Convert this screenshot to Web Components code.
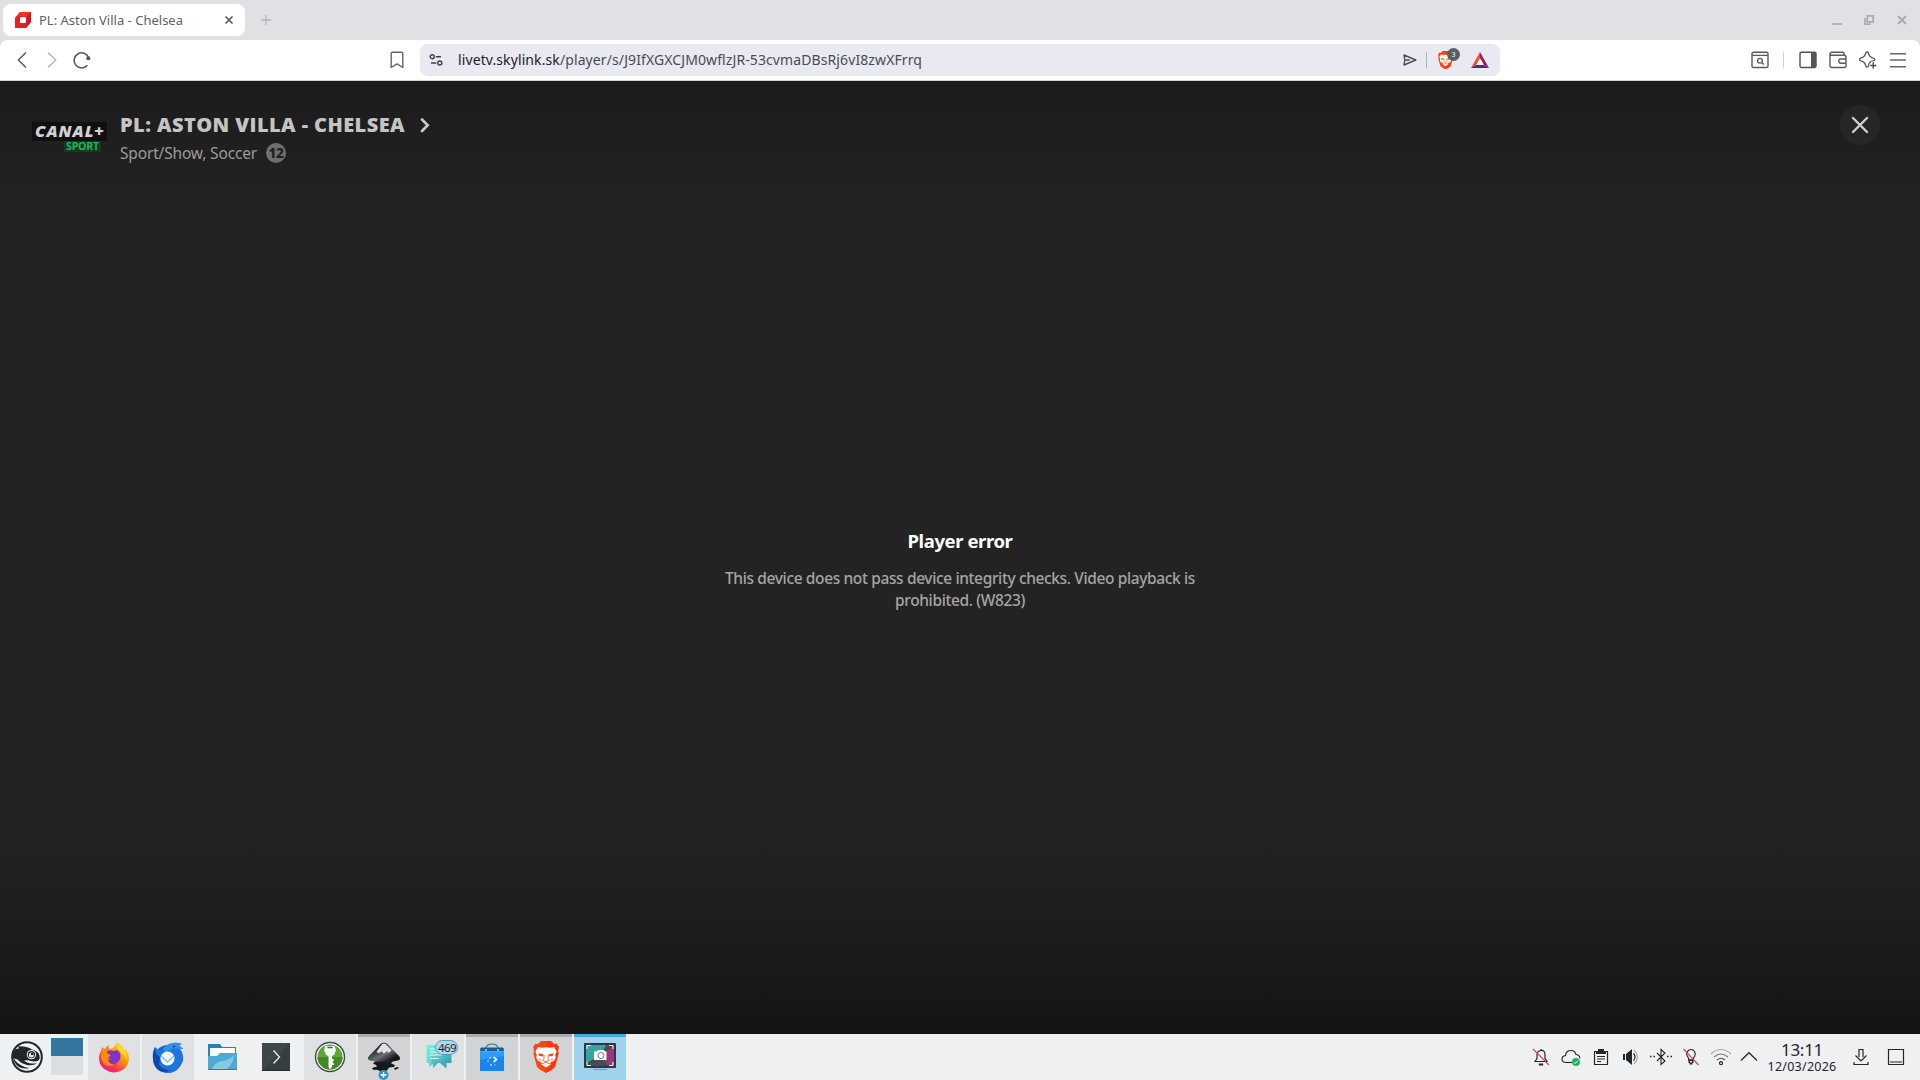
<!DOCTYPE html>
<html lang="en">
<head>
<meta charset="utf-8">
<title>PL: Aston Villa - Chelsea</title>
<style>
  body {
    margin: 0;
    overflow: hidden;
    font-family: "Noto Sans", sans-serif;
  }
</style>
</head>
<body>
<desktop-screen>
  <browser-tabs slot="tabs"></browser-tabs>
  <browser-toolbar slot="toolbar"></browser-toolbar>
  <player-view slot="page"></player-view>
  <task-bar slot="panel"></task-bar>
</desktop-screen>

<script>
const define = (name, html, connected) => {
  const template = document.createElement('template');
  template.innerHTML = html;
  customElements.define(name, class extends HTMLElement {
    constructor() {
      super();
      this.attachShadow({ mode: 'open' }).appendChild(template.content.cloneNode(true));
    }
    connectedCallback() {
      if (connected) connected.call(this);
    }
  });
};

// one line of text, tracked so that it fills the given width
define('fit-text', `
  <style>
    :host { display: block; white-space: nowrap; }
    span { display: inline-block; }
  </style>
  <span><slot></slot></span>
`, function () {
  const span = this.shadowRoot.querySelector('span');
  const want = Number(this.getAttribute('width'));
  const count = this.textContent.length;
  this.style.width = want + 'px';
  this.style.letterSpacing = (want - span.getBoundingClientRect().width) / count + 'px';
});

const ICONS = {
  favicon: [16, 16, `<path d="M5 0h11v10l-5 6H0V6z" fill="#e32227"/><path d="M5 0h11l-4 4H4L0 6z" fill="#ec3330"/><path d="M16 0v10l-5 6v-4l1-8z" fill="#d3191f"/><rect x="5" y="5" width="6" height="6" rx="1" fill="#fff"/>`],
  tabclose: [10, 10, `<path d="M1.5 1.5l7 7m0-7l-7 7" stroke="#5b5b60" stroke-width="1.7"/>`],
  plus: [12, 12, `<path d="M6 1v10M1 6h10" stroke="#b4b4b8" stroke-width="1.3"/>`],
  minimize: [12, 12, `<path d="M1 10h10" stroke="#b3b2b7" stroke-width="2"/>`],
  restore: [12, 12, `<path d="M4.2 1.8h6v6h-6zM2 4v6.2h6" fill="none" stroke="#acabb0" stroke-width="1.7"/>`],
  winclose: [12, 12, `<path d="M2 2l8 8m0-8l-8 8" stroke="#acabb0" stroke-width="2"/>`],
  back: [18, 18, `<path d="M13 1.5L5.3 9l7.7 7.5" fill="none" stroke="#55565b" stroke-width="1.4"/>`],
  forward: [18, 18, `<path d="M5 1.5L12.7 9 5 16.5" fill="none" stroke="#b5b5b9" stroke-width="1.4"/>`],
  reload: [18, 18, `<path d="M14.4 14.2A7.5 7.5 0 1 1 15.6 6.6" fill="none" stroke="#55565b" stroke-width="1.5"/><circle cx="15.3" cy="7.2" r="2" fill="#55565b"/>`],
  bookmark: [18, 18, `<path d="M3.2 16.5V2.6q0-1.4 1.4-1.4h8.8q1.4 0 1.4 1.4v13.9L9 12.8z" fill="none" stroke="#63646a" stroke-width="1.4" stroke-linejoin="round"/>`],
  site: [14, 14, `<g fill="none" stroke="#3f4046" stroke-width="1.4"><circle cx="3.2" cy="3.7" r="2"/><path d="M6.8 3.7H12M2 10h5.2"/><circle cx="10.8" cy="10" r="2"/></g>`],
  send: [14, 14, `<path d="M1 2l11.8 5L1 12l.8-5zM1.8 7h5" fill="none" stroke="#4c4d55" stroke-width="1.4" stroke-linejoin="round"/>`],
  search: [18, 18, `<rect x="1" y="1.2" width="16" height="15.3" rx="1.6" fill="none" stroke="#5a5b60" stroke-width="1.4"/><path d="M1 4.4h16" stroke="#5a5b60" stroke-width="1.3"/><circle cx="9" cy="9.7" r="2.4" fill="none" stroke="#5a5b60" stroke-width="1.3"/><path d="M10.8 11.5l2 2" stroke="#5a5b60" stroke-width="1.3"/>`],
  sidebar: [18, 18, `<rect x="1" y="1.2" width="16" height="15.3" rx="1.4" fill="none" stroke="#4f5055" stroke-width="1.4"/><path d="M12 1.2h5v15.3h-5z" fill="#55565b"/>`],
  wallet: [18, 18, `<path d="M15 4.3V2.5Q15 1.2 13.7 1.2H3Q1 1.2 1 3.3v11.3q0 1.9 2 1.9h12q2 0 2-2V6.3q0-2-2-2H3Q1.3 4.3 1 3M17 8h-5.2q-2 0-2 2.1t2 2.1H17" fill="none" stroke="#5a5b60" stroke-width="1.4"/>`],
  sparkle: [18, 18, `<path d="M8 1q1.2 0 1.4 1.1.7 4 5 5 1.3.2 1.3 1.4t-1.3 1.3q-4.3.8-5 5Q9.2 16 8 16t-1.3-1.3q-.8-4-5-4.8Q.6 9.6.6 8.5T1.700 7.100q4.200-1 5-5Q6.900 1 8 1z" fill="none" stroke="#5a5b60" stroke-width="1.4"/><path d="M14.300 10.500v7M10.800 14h7" stroke="#fff" stroke-width="4"/><path d="M14.300 11.300v6.200M11.200 14.400h6.200" stroke="#4c4d52" stroke-width="1.500"/>`],
  menu: [18, 18, `<path d="M1 2.700h16M1 9h16M1 15.800h16" stroke="#66676b" stroke-width="1.600"/>`],
  lion: [26, 32, `<path d="M8 0h10l3 3 2.500-.3L26 6l-1 3 .5 4-3.500 13-3.500 3L13 32l-5.500-3L4 26 .5 13 1 9 0 6l2.500-3.300L5 3z" fill="#f9480f"/><path d="M13 0h5l3 3 2.500-.3L26 6l-1 3 .5 4-3.500 13-3.500 3L13 32z" fill="#fb2b0c" opacity=".5"/><path d="M13 6.300l4 .5 4-.8 2.600 4.500-1.400 3.500.5 2.500-1.400 3-4 2 .4 2L13 26.500 8.300 23.500l.4-2-4-2-1.400-3 .5-2.500-1.400-3.500L5 6l4 .8z" fill="#fff"/><path d="M5.500 12.300l5 1-.8 2.200-3.700-.8zM20.500 12.300l-5 1 .8 2.200 3.700-.8z" fill="#f9480f"/><path d="M11 14v3.500l-.8 2L13 21l2.800-1.500-.8-2V14M9 23l4-2 4 2M6 18l2.500 1.500M20 18l-2.500 1.500" fill="none" stroke="#f9480f" stroke-width=".8"/>`],
  bat: [18, 16, `<path d="M9 0L0 16l5.500-3.200L9 6.300z" fill="#ff4724"/><path d="M9 0l9 16-5.500-3.200L9 6.300z" fill="#9e1f63"/><path d="M0 16h18l-5.500-3.200h-7z" fill="#4b2d8e"/><path d="M9 6.300l3.700 6.500H5.300z" fill="#fff"/>`],
  chevron: [12, 16, `<path d="M3 2.500l5.700 5.700L3 14" fill="none" stroke="#c8c8c8" stroke-width="2.700" stroke-linecap="round"/>`],
  close: [18, 18, `<path d="M2 2l14 14m0-14L2 16" stroke="#d0d0d0" stroke-width="2.400" stroke-linecap="round"/>`],

  suse: [32, 32, `<circle cx="16" cy="16" r="14.800" fill="#f1f2f2" stroke="#20272a" stroke-width="2"/><path d="M2 11Q4 7.500 8 7.500L7 5.300q9-.3 14 3.200 6.500 1.500 7.500 6 .8 4.500-2 5.500-3.500 1-8.500-.5-3-.8-5 .2 5 3.500 13 2.800-4 2.500-10 1.500-6-1.500-9.500-5.500l-3.500-1q2 4 7.500 7 3.500 2 8 2.500-8 2-13-3Q1 19 2 11z" fill="#20272a"/><circle cx="20.400" cy="13.600" r="4.700" fill="#f1f2f2"/><circle cx="20.400" cy="13.600" r="3.700" fill="#20272a"/><circle cx="20.400" cy="13.900" r="2.500" fill="#f1f2f2"/><ellipse cx="21.100" cy="13.200" rx="1.500" ry="1.100" fill="#20272a"/>`],
  firefox: [32, 32, `<defs><linearGradient id="f" x1="1" y1="0" x2=".2" y2="1"><stop offset=".1" stop-color="#ffe226"/><stop offset=".45" stop-color="#ff980e"/><stop offset=".75" stop-color="#ff3750"/><stop offset="1" stop-color="#e31587"/></linearGradient></defs><path d="M19 1q6 3 7 8 2 1 2-1 3 5 3 9 0 8-6.500 12T11 30.500Q1 27 1 17q0-4 2-7l1-4q1 2 3 2 1-3 4-4-1 3 1 4 5-1 7-7z" fill="url(#f)"/><path d="M8 11q4-3 7-1l4-1q5 3 3 9-2 5-7 5-6 0-7-5 3 2 5 0-4-1-4-4z" fill="#7f35c9"/><path d="M4 8q3 1 6 1-2 2 0 4l3 1-3 3q-1 5 6 7-9 3-12-4-2-6 0-12z" fill="#ff8a16"/><path d="M19 1q6 3 7 8 3 4 2 10-1-5-5-8-5-3-4-10z" fill="#ffd92e"/>`],
  thunderbird: [32, 32, `<circle cx="16" cy="18" r="14" fill="#1565cf"/><path d="M3 6q4 5 10 1 8-8 17-4-2 0-3 2 3 1 4 3h-3q4 5 3 12-4 11-16 12Q1 30 1 17q0-6 2-11z" fill="#1f74de"/><path d="M11 7q8-8 19-4-2 0-3 2 3 1 4 3h-3q-8-3-15 5z" fill="#3191e6"/><path d="M3 6q0 8 5 10l-1 8q5 6 13 5-13 6-18-6Q-1 13 3 6z" fill="#0d48a8"/><circle cx="15.500" cy="17.500" r="7" fill="#eef6ff"/><path d="M9 15l6.500 6 6.500-6" fill="none" stroke="#8eb9e8" stroke-width="1.400"/><circle cx="22" cy="5.500" r=".9" fill="#08306b"/>`],
  folder: [32, 32, `<path d="M2 3h12l2 3h14v9H2z" fill="#2782b5"/><path d="M4 7h25v10H4z" fill="#f9fcfd"/><path d="M2 15h9l3-3h17v17H2z" fill="#4daad4"/><path d="M6 29q2-8 10-9 8-1 12-6-1 11-9 15z" fill="#85c9e4"/><path d="M2 28h29v1H2z" fill="#2b7eac"/>`],
  terminal: [32, 32, `<rect x="2" y="2" width="28" height="28" fill="#343d40"/><path d="M2 2h28L2 30z" fill="#3e484b"/><path d="M2 29h28v1H2z" fill="#23292b"/><path d="M13.500 9.500l6 6.500-6 6.500" fill="none" stroke="#e8eaea" stroke-width="1.400"/>`],
  keepass: [32, 32, `<circle cx="16" cy="16" r="14.500" fill="#fff" stroke="#45494a" stroke-width="1.400"/><circle cx="16" cy="16" r="12.600" fill="#5da638"/><path d="M3.500 16a12.500 12.500 0 0 0 25 0z" fill="#43892a"/><path d="M11.500 5h9l1.500 4-1.500 4.500-2.500 1.500v11l-2 2.500-1.500-2.500V15L12 14l-2-5z" fill="#f4f6f4"/><path d="M14 6.500h4" stroke="#45692e" stroke-width="1.500" stroke-linecap="round"/><path d="M17.800 18h2v2h-1v2h1v2h-2z" fill="#f4f6f4"/>`],
  inkscape: [34, 40, `<defs><linearGradient id="k" x1="0" y1="0" x2="1" y2="1"><stop offset=".2" stop-color="#111"/><stop offset=".55" stop-color="#6c7077"/><stop offset=".8" stop-color="#17181b"/></linearGradient></defs><path d="M14 1.800q3-2.300 6 0L32 14q2.500 3.500-1 4.500-6 1.500-14 1.500T3 18.500q-3.500-1-1-4.500z" fill="url(#k)"/><path d="M15 2.200q2-1.200 4 0l5.500 6-2.500 2.500-2.500-1.500-2.500 2.500-2.500-2.500-2.500 2-2.500-1.500z" fill="#e0e1e8"/><path d="M8 19.500h18l-2 2 4 1.500-1 2-5 .5-2 3-5 2-4-2.500-5-.5-1-1.500 5-1.500-1-1.500-3-1.500z" fill="#17181b"/><path d="M27 26l4-1 1 1-4 2zM5 26l4 1-2 1z" fill="#17181b"/><circle cx="16.500" cy="33" r="5" fill="#3994bd"/><path d="M16.500 30.200v5.600M13.700 33h5.600" stroke="#fff" stroke-width="1.300"/>`],
  chat: [32, 32, `<defs><linearGradient id="c" x1="0" y1="0" x2="1" y2="1"><stop offset="0" stop-color="#7ef0dc"/><stop offset="1" stop-color="#4bb9bd"/></linearGradient><linearGradient id="d" x1="0" y1="0" x2="1" y2="1"><stop offset="0" stop-color="#5cd6d4"/><stop offset="1" stop-color="#2b8fa0"/></linearGradient></defs><path d="M4.700 4H24v18H12l-5 4v-4H4.700z" fill="url(#c)"/><path d="M8 8h8M8 11h8" stroke="#e9fffb" stroke-width="1.200"/><path d="M9.700 14h19.800v8h-5v5.500L18 22h-2l-5 5v-5H9.700z" fill="url(#d)"/><path d="M8 14h12M8 17.500h9" stroke="#e9fffb" stroke-width="1.200"/>`],
  store: [32, 32, `<path d="M10 8q0-4.800 6-4.800T22 8" fill="none" stroke="#2c8d9b" stroke-width="1.300"/><path d="M4 7h24v23H4z" fill="#2a9df5"/><path d="M4 19l24-4v15H4z" fill="#1c83ee"/><path d="M5 6.500h22l1 4H4z" fill="#1a5f8f"/><path d="M4 10h24v1.500H4z" fill="#38a9f6"/><g fill="#b5dcff"><circle cx="14" cy="17" r="1"/><circle cx="12" cy="20" r=".8"/><circle cx="15" cy="24" r="1"/><circle cx="19" cy="24" r=".7"/><circle cx="10" cy="9" r=".9"/><circle cx="22" cy="9" r=".9"/></g><path d="M17.500 16l3 2.500-3 2.500" fill="none" stroke="#d9f0ff" stroke-width="1.800"/>`],
  spectacle: [34, 32, `<rect x="1" y="2" width="32" height="25" rx="1" fill="#30373c"/><path d="M3 4h28v21H3z" fill="#464c54"/><path d="M3 4h20l-6 11L3 22z" fill="#3ba39f"/><path d="M31 5v20h-5l-9-10z" fill="#943a77"/><g fill="none" stroke="#fff" stroke-width="1"><path d="M4 8V4.500h4M26 4.500h4V8M30 21v3.500h-4M8 24.500H4V21"/></g><path d="M11 10.500h3l1-1.500h6l1 1.500h1.500V19H11z" fill="#fff"/><circle cx="18" cy="14.500" r="3" fill="none" stroke="#6b7682" stroke-width="1"/><path d="M10 28.500h14" stroke="#8a9297"/>`],

  bell: [22, 22, `<path d="M5 15.500l2-3V9q0-4 4-4.500T15 9v3.500l2 3zM11 4.500V3" fill="none" stroke="#232629" stroke-width="1.200"/><path d="M8.800 17.500h4.400v2H8.800z" fill="#232629"/><path d="M3 3l16 16" stroke="#da4453" stroke-width="1.100"/>`],
  cloud: [22, 22, `<path d="M6 16.500q-4 0-4-3.400 0-3 3.500-3.600Q6 4.500 11 4.500q4 0 5 4 4 .5 3.800 4" fill="none" stroke="#232629" stroke-width="1.100"/><path d="M6 16.500h6" stroke="#232629" stroke-width="1.100"/><circle cx="16" cy="16" r="4" fill="#27ae60"/><path d="M14 16.300l1.300 1.300 2.700-3" fill="none" stroke="#fff"/>`],
  clipboard: [22, 22, `<path d="M4.500 5.500h13v13h-13z" fill="none" stroke="#232629" stroke-width="1.200"/><path d="M6 5h2V3h6v2h2v3H6z" fill="#232629"/><path d="M7 10.500h8M7 13h8M7 15.500h4" stroke="#232629" stroke-width="1"/>`],
  volume: [22, 22, `<path d="M3 8h2v6H3zM6 8l6-5v16l-6-5z" fill="#232629"/><path d="M13.500 7.500q3 3.500 0 7" fill="none" stroke="#232629" stroke-width="1.200"/><path d="M14 4q7 7 0 14" fill="none" stroke="#a8aaac" stroke-width="1.200"/>`],
  bluetooth: [24, 22, `<path d="M8 7l8 8-4 3.500v-15L16 7l-8 8" fill="none" stroke="#232629" stroke-width="1.100"/><path d="M1 10.500h1.500M4.500 10.500H6M18 10.500h1.500M21.500 10.500H23" stroke="#232629" stroke-width="1.500"/>`],
  bulb: [22, 22, `<path d="M8.800 14q0-2-1.500-4Q6 8 7.500 5.500 8.800 3.500 11 3.500t3.500 2Q16 8 14.700 10q-1.500 2-1.500 4z" fill="none" stroke="#232629" stroke-width="1.200"/><path d="M8.500 13.500h5v3.500h-1v1.500h-3V17h-1z" fill="#232629"/><path d="M10 15h2v1.500h-2z" fill="#eee"/><path d="M3.500 3l15 16" stroke="#da4453" stroke-width="1.100"/>`],
  wifi: [22, 22, `<g fill="none"><path d="M.8 8q10-9 20.400 0" stroke="#a7a9ab" stroke-width="1.100"/><path d="M4 11q7-6 14 0" stroke="#777a7c" stroke-width="1.100"/><path d="M7 14q4-3.500 8 0" stroke="#55585a" stroke-width="1.100"/><circle cx="11" cy="17.200" r="1.500" stroke="#232629" stroke-width="1.200"/></g>`],
  caret: [22, 22, `<path d="M3 14.500L11 6.700l8 7.800" fill="none" stroke="#232629" stroke-width="1.200"/>`],
  download: [22, 22, `<path d="M4 16v2.500h14V16M9 11V3.500h4V11M5.500 9.500L11 15l5.500-5.500" fill="none" stroke="#232629" stroke-width="1.200"/>`],
  desktop: [22, 22, `<path d="M3.500 3.500h15v15h-15zM5 16h12" fill="none" stroke="#232629" stroke-width="1.200"/>`],
};

class UiIcon extends HTMLElement {
  constructor() {
    super();
    this.attachShadow({ mode: 'open' });
  }
  connectedCallback() {
    const [w, h, body] = ICONS[this.getAttribute('name')];
    const size = Number(this.getAttribute('width')) || w;
    this.shadowRoot.innerHTML = `
      <style>
        :host { display: block; flex-shrink: 0; }
        svg { display: block; }
      </style>
      <svg width="${size}" height="${size * h / w}" viewBox="0 0 ${w} ${h}">${body}</svg>
    `;
  }
}
customElements.define('ui-icon', UiIcon);

define('browser-tabs', `
  <style>
    :host {
      display: flex; align-items: center; box-sizing: border-box;
      height: 40px; padding: 0 12px 0 3px; background: #e1e0e5;
    }
    .tab {
      display: flex; align-items: center; box-sizing: border-box;
      width: 242px; height: 32px; padding: 0 11px 0 12px;
      border-radius: 8px; background: #fff;
      color: #5f5f64; font-size: 13px;
    }
    fit-text { margin-left: 8px; }
    .tab ui-icon:last-child { margin-left: auto; }
    .new { margin-left: 15px; }
    .window { display: flex; gap: 21px; margin-left: auto; }
  </style>
  <div class="tab">
    <ui-icon name="favicon"></ui-icon>
    <fit-text width="144">PL: Aston Villa - Chelsea</fit-text>
    <ui-icon name="tabclose"></ui-icon>
  </div>
  <ui-icon class="new" name="plus"></ui-icon>
  <div class="window">
    <ui-icon name="minimize" style="margin-right: -1px"></ui-icon>
    <ui-icon name="restore"></ui-icon>
    <ui-icon name="winclose"></ui-icon>
  </div>
`);

define('browser-toolbar', `
  <style>
    :host { display: block; background: #e1e0e5; }
    .bar {
      display: flex; align-items: center; box-sizing: border-box;
      height: 41px; padding: 0 13px; background: #fff;
      border-bottom: 1px solid #d5d5d8; border-radius: 8px 8px 0 0;
    }
    .nav { display: flex; gap: 12px; }
    .mark { margin-left: 297px; }
    .address {
      display: flex; align-items: center; box-sizing: border-box;
      width: 1080px; height: 32px; margin-left: 14px; padding: 0 11px 0 9px;
      border-radius: 8px; background: #e9e9f1;
      color: #4a4b51; font-size: 14px;
    }
    .address fit-text { margin: 0 0 1px 15px; }
    b { color: #202126; font-weight: 400; }
    .send { margin-left: auto; }
    .line { width: 1px; height: 16px; margin: 0 11px 0 9px; background: #b3b3b9; }
    .shield { position: relative; margin-right: 18px; }
    .count {
      position: absolute; left: 9px; top: -3px; width: 13px; height: 13px;
      border-radius: 50%; background: #5a5c68; color: #fff;
      font-size: 7px; line-height: 13px; text-align: center;
    }
    .tools { display: flex; align-items: center; margin-left: auto; }
    .tools i { width: 1px; height: 16px; margin: 0 15px 0 14px; background: #d4d4d8; }
    .tools ui-icon + ui-icon { margin-left: 12px; }
  </style>
  <div class="bar">
    <div class="nav">
      <ui-icon name="back"></ui-icon>
      <ui-icon name="forward"></ui-icon>
      <ui-icon name="reload"></ui-icon>
    </div>
    <ui-icon class="mark" name="bookmark"></ui-icon>
    <div class="address">
      <ui-icon name="site"></ui-icon>
      <fit-text width="464"><b>livetv.skylink.sk</b>/player/s/J9IfXGXCJM0wflzJR-53cvmaDBsRj6vI8zwXFrrq</fit-text>
      <ui-icon class="send" name="send"></ui-icon>
      <div class="line"></div>
      <div class="shield"><ui-icon name="lion" width="15"></ui-icon><span class="count">3</span></div>
      <ui-icon name="bat"></ui-icon>
    </div>
    <div class="tools">
      <ui-icon name="search"></ui-icon><i></i>
      <ui-icon name="sidebar"></ui-icon>
      <ui-icon name="wallet"></ui-icon>
      <ui-icon name="sparkle"></ui-icon>
      <ui-icon name="menu"></ui-icon>
    </div>
  </div>
`);

define('channel-logo', `
  <style>
    :host { display: flex; flex-direction: column; width: 75px; }
    .name {
      height: 19px; padding-left: 3px; background: #101010; color: #d2d2d2;
      font: italic 800 16.5px/18px "Open Sans", "Noto Sans", sans-serif;
    }
    .sport {
      align-self: flex-end; width: 35px; height: 11px; margin-right: 6px; padding-left: 2px;
      background: #143c20; color: #28b35c; font: 700 10.5px/11px "Open Sans", "Noto Sans", sans-serif;
    }
  </style>
  <div class="name"><fit-text width="70">CANAL+</fit-text></div>
  <div class="sport"><fit-text width="33">SPORT</fit-text></div>
`);

define('player-view', `
  <style>
    :host {
      display: flex; flex-direction: column; box-sizing: border-box;
      height: 953px; padding: 24px 40px 0 32px;
      background: linear-gradient(#1c1c1c 0, #232323 140px, #232323 740px, #1d1d1d 850px, #141414 953px);
    }
    header { display: flex; align-items: flex-start; }
    channel-logo { margin-top: 17px; }
    .info { margin-left: 13px; }
    h1 {
      display: flex; align-items: center; gap: 14px; margin: 4px 0 0;
      height: 30px; color: #c4c4c4; font: 800 20px "Open Sans", "Noto Sans", sans-serif;
    }
    h1 ui-icon { margin-top: 2px; }
    .genre {
      display: flex; align-items: center; gap: 9px;
      height: 24px; margin-top: 2px; color: #9b9b9b; font-size: 15.5px;
    }
    .age {
      width: 20px; height: 20px; border-radius: 50%; background: #6f6f6f; color: #202020;
      font-size: 13.5px; font-weight: 800; line-height: 20px; text-align: center; letter-spacing: -.3px;
    }
    .close {
      display: flex; align-items: center; justify-content: center;
      width: 40px; height: 40px; margin-left: auto; border-radius: 50%; background: #262626;
    }
    .message {
      display: flex; flex-direction: column; align-items: center;
      margin-top: 361px; margin-left: 8px; color: #a5a5a5;
      font-size: 15.5px; font-weight: 500; line-height: 22px;
    }
    h2 { margin: 0 0 13px; color: #fff; font-size: 18.5px; line-height: 29px; height: 28px; font-weight: 700; }
  </style>
  <header>
    <channel-logo></channel-logo>
    <div class="info">
      <h1><fit-text width="285">PL: ASTON VILLA - CHELSEA</fit-text><ui-icon name="chevron"></ui-icon></h1>
      <div class="genre"><fit-text width="137">Sport/Show, Soccer</fit-text><span class="age">12</span></div>
    </div>
    <div class="close"><ui-icon name="close"></ui-icon></div>
  </header>
  <div class="message">
    <h2><fit-text width="105">Player error</fit-text></h2>
    <fit-text width="470">This device does not pass device integrity checks. Video playback is</fit-text>
    <fit-text width="130">prohibited. (W823)</fit-text>
  </div>
`);

define('task-button', `
  <style>
    :host {
      display: flex; align-items: center; justify-content: center; box-sizing: border-box;
      position: relative; width: 52px; height: 46px; background: #e0e1e2;
    }
    :host([kind="plain"]) { background: none; }
    :host([kind="open"]) { background: #d2d3d4; box-shadow: inset 0 3px #aaabac; }
    :host([kind="active"]) { background: #9fd2ed; box-shadow: inset 0 3px #46a9d9; }
  </style>
  <slot></slot>
`);

define('task-bar', `
  <style>
    :host { display: flex; align-items: center; height: 46px; background: #eff0f1; color: #232629; }
    .start { margin-left: 11px; }
    .pager { display: flex; flex-direction: column; width: 32px; margin: 0 5px 1px 8px; }
    .pager div { height: 19px; background: #dcdddf; }
    .pager .on { height: 18px; background: #33769d; }
    .tasks { display: flex; gap: 2px; }
    .ink { margin-top: 9px; }
    .badge {
      position: absolute; right: 6px; top: 6px; height: 13px; padding: 0 1px 0 2px;
      border: 1px solid #4c9fc8; border-radius: 8px; background: #b5d7e7;
      font-size: 11.5px; line-height: 13px; letter-spacing: -.6px;
    }
    .tray { display: flex; align-items: center; gap: 8px; margin-left: auto; }
    .clock { display: flex; flex-direction: column; align-items: center; width: 70px; margin: 0 5px 0 -1px; }
    .time { font-size: 17px; line-height: 20px; }
    .date { font-size: 12.5px; line-height: 14px; }
  </style>
  <ui-icon class="start" name="suse"></ui-icon>
  <div class="pager"><div class="on"></div><div></div></div>
  <div class="tasks">
    <task-button><ui-icon name="firefox"></ui-icon></task-button>
    <task-button><ui-icon name="thunderbird"></ui-icon></task-button>
    <task-button kind="plain"><ui-icon name="folder"></ui-icon></task-button>
    <task-button kind="plain"><ui-icon name="terminal"></ui-icon></task-button>
    <task-button><ui-icon name="keepass"></ui-icon></task-button>
    <task-button kind="open"><ui-icon class="ink" name="inkscape"></ui-icon></task-button>
    <task-button><ui-icon name="chat"></ui-icon><span class="badge">469</span></task-button>
    <task-button kind="open"><ui-icon name="store"></ui-icon></task-button>
    <task-button kind="open"><ui-icon name="lion"></ui-icon></task-button>
    <task-button kind="active"><ui-icon name="spectacle"></ui-icon></task-button>
  </div>
  <div class="tray">
    <ui-icon name="bell"></ui-icon>
    <ui-icon name="cloud"></ui-icon>
    <ui-icon name="clipboard"></ui-icon>
    <ui-icon name="volume"></ui-icon>
    <ui-icon name="bluetooth" style="margin: 0 -1px"></ui-icon>
    <ui-icon name="bulb"></ui-icon>
    <ui-icon name="wifi"></ui-icon>
    <ui-icon name="caret" style="margin-left: -2px"></ui-icon>
    <div class="clock">
      <fit-text class="time" width="42">13:11</fit-text>
      <fit-text class="date" width="69">12/03/2026</fit-text>
    </div>
    <ui-icon name="download"></ui-icon>
    <ui-icon name="desktop" style="margin: 0 13px 0 5px"></ui-icon>
  </div>
`);

define('desktop-screen', `
  <style>
    :host { display: flex; flex-direction: column; width: 1920px; height: 1080px; overflow: hidden; }
    slot { display: contents; }
  </style>
  <slot name="tabs"></slot>
  <slot name="toolbar"></slot>
  <slot name="page"></slot>
  <slot name="panel"></slot>
`);
</script>
</body>
</html>
